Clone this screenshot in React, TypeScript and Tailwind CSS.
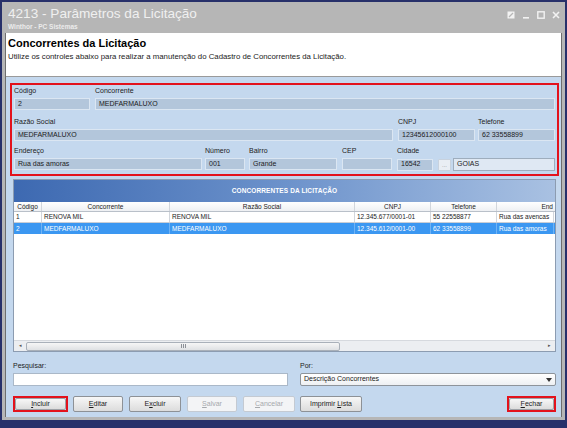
import React from "react";

const Box = ({ className = "", children }: { className?: string; children?: React.ReactNode }) => (
  <div className={`h-[12px] bg-[#b3c6db] border border-[#dbe6f2] flex items-center px-[3px] text-[7px] text-[#1b1b1b] whitespace-nowrap overflow-hidden ${className}`}>
    {children}
  </div>
);

const Label = ({ children }: { children?: React.ReactNode }) => (
  <div className="h-[13px] flex items-center text-[7px] text-[#222] whitespace-nowrap">{children}</div>
);

// ul = index of the mnemonic letter
const Btn = ({
  label,
  ul,
  className = "",
  disabled = false,
}: {
  label: string;
  ul: number;
  className?: string;
  disabled?: boolean;
}) => (
  <div
    className={`h-[16px] flex items-center justify-center whitespace-pre rounded-[2px] border text-[7px] ${
      disabled
        ? "border-[#c4cad2] bg-[#f3f4f6] text-[#a6a9ad]"
        : "border-[#8d9196] bg-gradient-to-b from-[#f7f7f7] to-[#dcdcdc] text-[#1c1c1c]"
    } ${className}`}
  >
    {label.slice(0, ul)}
    <span className="underline decoration-[0.5px] underline-offset-1">{label.charAt(ul)}</span>
    {label.slice(ul + 1)}
  </div>
);

const cols = ["w-[28px]", "w-[128px]", "w-[185px]", "w-[76px]", "w-[66px]", "w-[57px]"];
const heads = ["Código", "Concorrente", "Razão Social", "CNPJ", "Telefone", "End"];
const rows = [
  ["1", "RENOVA MIL", "RENOVA MIL", "12.345.677/0001-01", "55 22558877", "Rua das avencas"],
  ["2", "MEDFARMALUXO", "MEDFARMALUXO", "12.345.612/0001-00", "62 33558899", "Rua das amoras"],
];

export default function App() {
  return (
    <div className="w-[567px] h-[428px] bg-[#27306a] pt-[2px] px-[2px] pb-[8px] font-['Liberation_Sans',Arial,sans-serif] overflow-hidden">
      <div className="h-[418px] bg-[#b6b6b6] px-[3px] pb-[3px] flex flex-col">
        {/* title bar */}
        <div className="h-[31px] flex justify-between">
          <div className="pl-[3px] pt-[3px]">
            <div className="text-[13.6px] leading-[17px] text-[#f0f0f0]">4213 - Parâmetros da Licitação</div>
            <div className="text-[6.5px] leading-[8px] font-bold text-[#ececec] mt-[1px]">Winthor - PC Sistemas</div>
          </div>
          <div className="flex items-start gap-[7px] pt-[9px] pr-[2px]">
            <svg width="8" height="8" viewBox="0 0 8 8">
              <rect x="0.5" y="0.5" width="7" height="7" fill="#f2f2f2" />
              <path d="M2 6 L6 2" stroke="#b6b6b6" strokeWidth="1.2" />
            </svg>
            <svg width="8" height="8" viewBox="0 0 8 8">
              <rect x="1" y="6" width="6" height="1.6" fill="#f2f2f2" />
            </svg>
            <svg width="8" height="8" viewBox="0 0 8 8">
              <rect x="0.8" y="0.8" width="6.4" height="6.4" fill="none" stroke="#f2f2f2" strokeWidth="1.4" />
            </svg>
            <svg width="8" height="8" viewBox="0 0 8 8">
              <path d="M1 1 L7 7 M7 1 L1 7" stroke="#f2f2f2" strokeWidth="1.6" />
            </svg>
          </div>
        </div>

        <div className="flex-1 flex flex-col border-x border-[#6e6e6e]">
          {/* page header */}
          <div className="h-[44px] bg-white px-[2px] pt-[4px] border-b border-[#9a9a9a]">
            <div className="text-[11px] leading-[13px] font-bold text-black">Concorrentes da Licitação</div>
            <div className="text-[7.8px] leading-[9px] text-[#222] mt-[2px]">
              Utilize os controles abaixo para realizar a manutenção do Cadastro de Concorrentes da Licitação.
            </div>
          </div>

          <div className="flex-1 bg-[#c4d8ee] pl-[4px] pr-[2px] pt-[6px] flex flex-col">
            {/* record form */}
            <div className="border-2 border-[#e3121c] px-[2px] pb-[3px] flex flex-col">
              <div className="flex gap-[5px]">
                <div className="w-[76px]">
                  <Label>Código</Label>
                  <Box>2</Box>
                </div>
                <div className="flex-1">
                  <Label>Concorrente</Label>
                  <Box>MEDFARMALUXO</Box>
                </div>
              </div>
              <div className="flex mt-[6px]">
                <div className="flex-1">
                  <Label>Razão Social</Label>
                  <Box>MEDFARMALUXO</Box>
                </div>
                <div className="w-[77px] ml-[5px]">
                  <Label>CNPJ</Label>
                  <Box>12345612000100</Box>
                </div>
                <div className="w-[77px] ml-[3px]">
                  <Label>Telefone</Label>
                  <Box>62 33558899</Box>
                </div>
              </div>
              <div className="flex mt-[4px]">
                <div className="w-[188px]">
                  <Label>Endereço</Label>
                  <Box>Rua das amoras</Box>
                </div>
                <div className="w-[40px] ml-[3px]">
                  <Label>Número</Label>
                  <Box>001</Box>
                </div>
                <div className="w-[88px] ml-[4px]">
                  <Label>Bairro</Label>
                  <Box>Grande</Box>
                </div>
                <div className="w-[50px] ml-[5px]">
                  <Label>CEP</Label>
                  <Box />
                </div>
                <div className="ml-[5px] flex-1">
                  <Label>Cidade</Label>
                  <div className="flex items-center">
                    <Box className="w-[36px]">16542</Box>
                    <div className="w-[13px] h-[12px] ml-[5px] bg-[#e9eef4] border border-[#c8d2de] rounded-[1px] text-[6px] text-[#8a8f96] flex items-center justify-center leading-none">
                      ...
                    </div>
                    <div className="flex-1 ml-[2px] h-[13px] bg-[#dfe8f3] border border-[#9eadbd] flex items-center px-[3px] text-[7px] text-[#1b1b1b]">
                      GOIAS
                    </div>
                  </div>
                </div>
              </div>
            </div>

            {/* grid */}
            <div className="mt-[3px] mx-[3px] h-[173px] border border-[#8c9cb1] bg-white flex flex-col overflow-hidden">
              <div className="h-[22px] bg-gradient-to-r from-[#3d69b1] via-[#6c92cb] to-[#a9c1e2] flex items-center justify-center text-[6.5px] font-bold text-white tracking-[0.1px]">
                CONCORRENTES DA LICITAÇÃO
              </div>
              <div className="h-[10px] flex bg-gradient-to-b from-white to-[#eef0f3] border-b border-[#b9c0c9]">
                {heads.map((h, i) => (
                  <div
                    key={h}
                    className={`${cols[i]} shrink-0 flex items-center text-[6.5px] text-[#222] whitespace-nowrap ${
                      i === 5 ? "justify-end pr-[1px]" : "justify-center border-r border-[#d2d6dc]"
                    }`}
                  >
                    {h}
                  </div>
                ))}
              </div>
              {rows.map((r, ri) => (
                <div
                  key={ri}
                  className={`h-[11px] flex ${
                    ri === 1 ? "bg-[#3b97f1] text-white" : "bg-white text-[#1b1b1b] border-b border-[#c9ced6]"
                  }`}
                >
                  {r.map((c, ci) => (
                    <div
                      key={ci}
                      className={`${cols[ci]} shrink-0 px-[2px] flex items-center text-[6.5px] whitespace-nowrap overflow-hidden ${
                        ri === 1 ? "border-r border-[#6fb3f5]" : "border-r border-[#d2d6dc]"
                      }`}
                    >
                      {c}
                    </div>
                  ))}
                </div>
              ))}
              <div className="flex-1" />
              {/* horizontal scrollbar */}
              <div className="h-[11px] flex items-center bg-[#eceef1] border-t border-[#d6d9de]">
                <div className="w-[12px] flex items-center justify-center text-[5px] text-[#555]">◂</div>
                <div className="w-[314px] h-[9px] rounded-[2px] border border-[#a9b0b9] bg-gradient-to-b from-[#f6f6f6] to-[#dfe1e4] flex items-center justify-center">
                  <div className="flex gap-[1px]">
                    <div className="w-[1px] h-[4px] bg-[#8c9097]" />
                    <div className="w-[1px] h-[4px] bg-[#8c9097]" />
                    <div className="w-[1px] h-[4px] bg-[#8c9097]" />
                  </div>
                </div>
                <div className="flex-1" />
                <div className="w-[12px] flex items-center justify-center text-[5px] text-[#555]">▸</div>
              </div>
            </div>

            {/* search */}
            <div className="flex mt-[8px] mx-[3px]">
              <div className="w-[275px]">
                <Label>Pesquisar:</Label>
                <div className="h-[13px] bg-white border border-[#aab8c8]" />
              </div>
              <div className="flex-1 ml-[12px]">
                <Label>Por:</Label>
                <div className="h-[13px] bg-gradient-to-b from-white to-[#eef0f3] border border-[#8e949b] rounded-[2px] flex items-center justify-between px-[3px] text-[7px] text-[#1b1b1b]">
                  <span>Descrição Concorrentes</span>
                  <svg width="6" height="4" viewBox="0 0 6 4">
                    <path d="M0 0 H6 L3 4 Z" fill="#333" />
                  </svg>
                </div>
              </div>
            </div>

            {/* actions */}
            <div className="flex mt-[10px] mx-[3px]">
              <div className="w-[55px] h-[16px] border-2 border-[#e3121c]">
                <Btn label="Incluir" ul={0} className="h-full border-[#9ea2a7]" />
              </div>
              <Btn label="Editar" ul={0} className="w-[50px] ml-[5px]" />
              <Btn label="Excluir" ul={1} className="w-[52px] ml-[6px]" />
              <Btn label="Salvar" ul={0} disabled className="w-[50px] ml-[6px]" />
              <Btn label="Cancelar" ul={0} disabled className="w-[52px] ml-[6px]" />
              <Btn label="Imprimir Lista" ul={9} className="w-[62px] ml-[5px]" />
              <div className="flex-1" />
              <div className="w-[49px] h-[16px] border-2 border-[#e3121c]">
                <Btn label="Fechar" ul={0} className="h-full border-[#9ea2a7]" />
              </div>
            </div>
          </div>
        </div>
      </div>
    </div>
  );
}
